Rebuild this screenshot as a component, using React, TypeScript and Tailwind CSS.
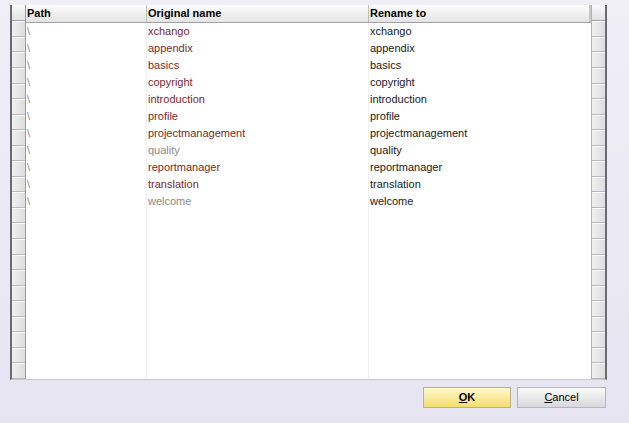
const rows = [
  { name: "xchango", muted: false },
  { name: "appendix", muted: false },
  { name: "basics", muted: false },
  { name: "copyright", muted: false },
  { name: "introduction", muted: false },
  { name: "profile", muted: false },
  { name: "projectmanagement", muted: false },
  { name: "quality", muted: true },
  { name: "reportmanager", muted: false },
  { name: "translation", muted: false },
  { name: "welcome", muted: true },
];

const emptyRows = Array.from({ length: 12 });

function SideCell() {
  return (
    <div className="h-[17px] border-b border-[#b8b8c0] border-t border-t-[#fbfbfb] bg-gradient-to-r from-[#f0f0f0] to-[#dedede]" />
  );
}

export default function App() {
  return (
    <div
      className="w-[629px] h-[423px] overflow-hidden bg-gradient-to-b from-[#f0eff6] to-[#e6e4f1] flex flex-col text-[11px]"
      style={{ fontFamily: "'Liberation Sans', Arial, sans-serif" }}
    >
      {/* grid */}
      <div className="mt-[5px] ml-[10px] w-[597px] h-[375px] bg-white border-l-2 border-r-2 border-[#6a6a70] border-b border-b-[#c8c8d0] flex overflow-hidden">
        {/* left row headers */}
        <div className="w-[14px] flex flex-col border-r border-[#9a9aa0]">
          <div className="h-[18px] border-b border-[#a0a0a8] bg-gradient-to-b from-[#fafafa] to-[#e2e2e2]" />
          {rows.map((r) => (
            <SideCell key={r.name} />
          ))}
          {emptyRows.map((_, i) => (
            <SideCell key={i} />
          ))}
        </div>

        {/* data */}
        <div className="flex-1 flex flex-col">
          <div className="h-[18px] flex border-b border-[#a0a0a8] bg-gradient-to-b from-[#fdfdfd] to-[#e4e4e4] font-bold text-black leading-[17px]">
            <div className="w-[121px] pl-[1px] border-r border-[#c0c0c0]">Path</div>
            <div className="w-[222px] pl-[1px] border-r border-[#c0c0c0]">Original name</div>
            <div className="flex-1 pl-[1px] border-r-2 border-[#c8c8c8]">Rename to</div>
          </div>
          <div className="flex-1 flex">
            <div className="w-[121px] border-r border-[#f0f0f0] flex flex-col">
              {rows.map((r) => (
                <div key={r.name} className="h-[17px] leading-[17px] pl-[1px] text-[#8a8a8a]">
                  \
                </div>
              ))}
            </div>
            <div className="w-[222px] border-r border-[#f0f0f0] flex flex-col">
              {rows.map((r) => (
                <div
                  key={r.name}
                  className={
                    r.muted
                      ? "h-[17px] leading-[17px] pl-[1px] text-[#8a8a8a]"
                      : "h-[17px] leading-[17px] pl-[1px] text-[#7a2a2a]"
                  }
                >
                  {r.name}
                </div>
              ))}
            </div>
            <div className="flex-1 flex flex-col">
              {rows.map((r) => (
                <div key={r.name} className="h-[17px] leading-[17px] pl-[1px] text-[#1a1a1a]">
                  {r.name}
                </div>
              ))}
            </div>
          </div>
        </div>

        {/* right column */}
        <div className="w-[14px] flex flex-col border-l border-[#b0b0b8]">
          <div className="h-[18px] border-b border-[#a0a0a8] bg-gradient-to-b from-[#fafafa] to-[#e2e2e2]" />
          {rows.map((r) => (
            <SideCell key={r.name} />
          ))}
          {emptyRows.map((_, i) => (
            <SideCell key={i} />
          ))}
        </div>
      </div>

      {/* buttons */}
      <div className="flex justify-end gap-[6px] pr-[23px] mt-[7px]">
        <button className="w-[88px] h-[21px] border border-[#b8b090] bg-gradient-to-b from-[#fff9cc] to-[#f4dd6a] text-black font-bold leading-[19px]">
          <span className="underline">O</span>K
        </button>
        <button className="w-[89px] h-[21px] border border-[#b4b4bc] bg-gradient-to-b from-[#fbfbfb] to-[#d8d8dc] text-black leading-[19px]">
          <span className="underline">C</span>ancel
        </button>
      </div>
    </div>
  );
}
